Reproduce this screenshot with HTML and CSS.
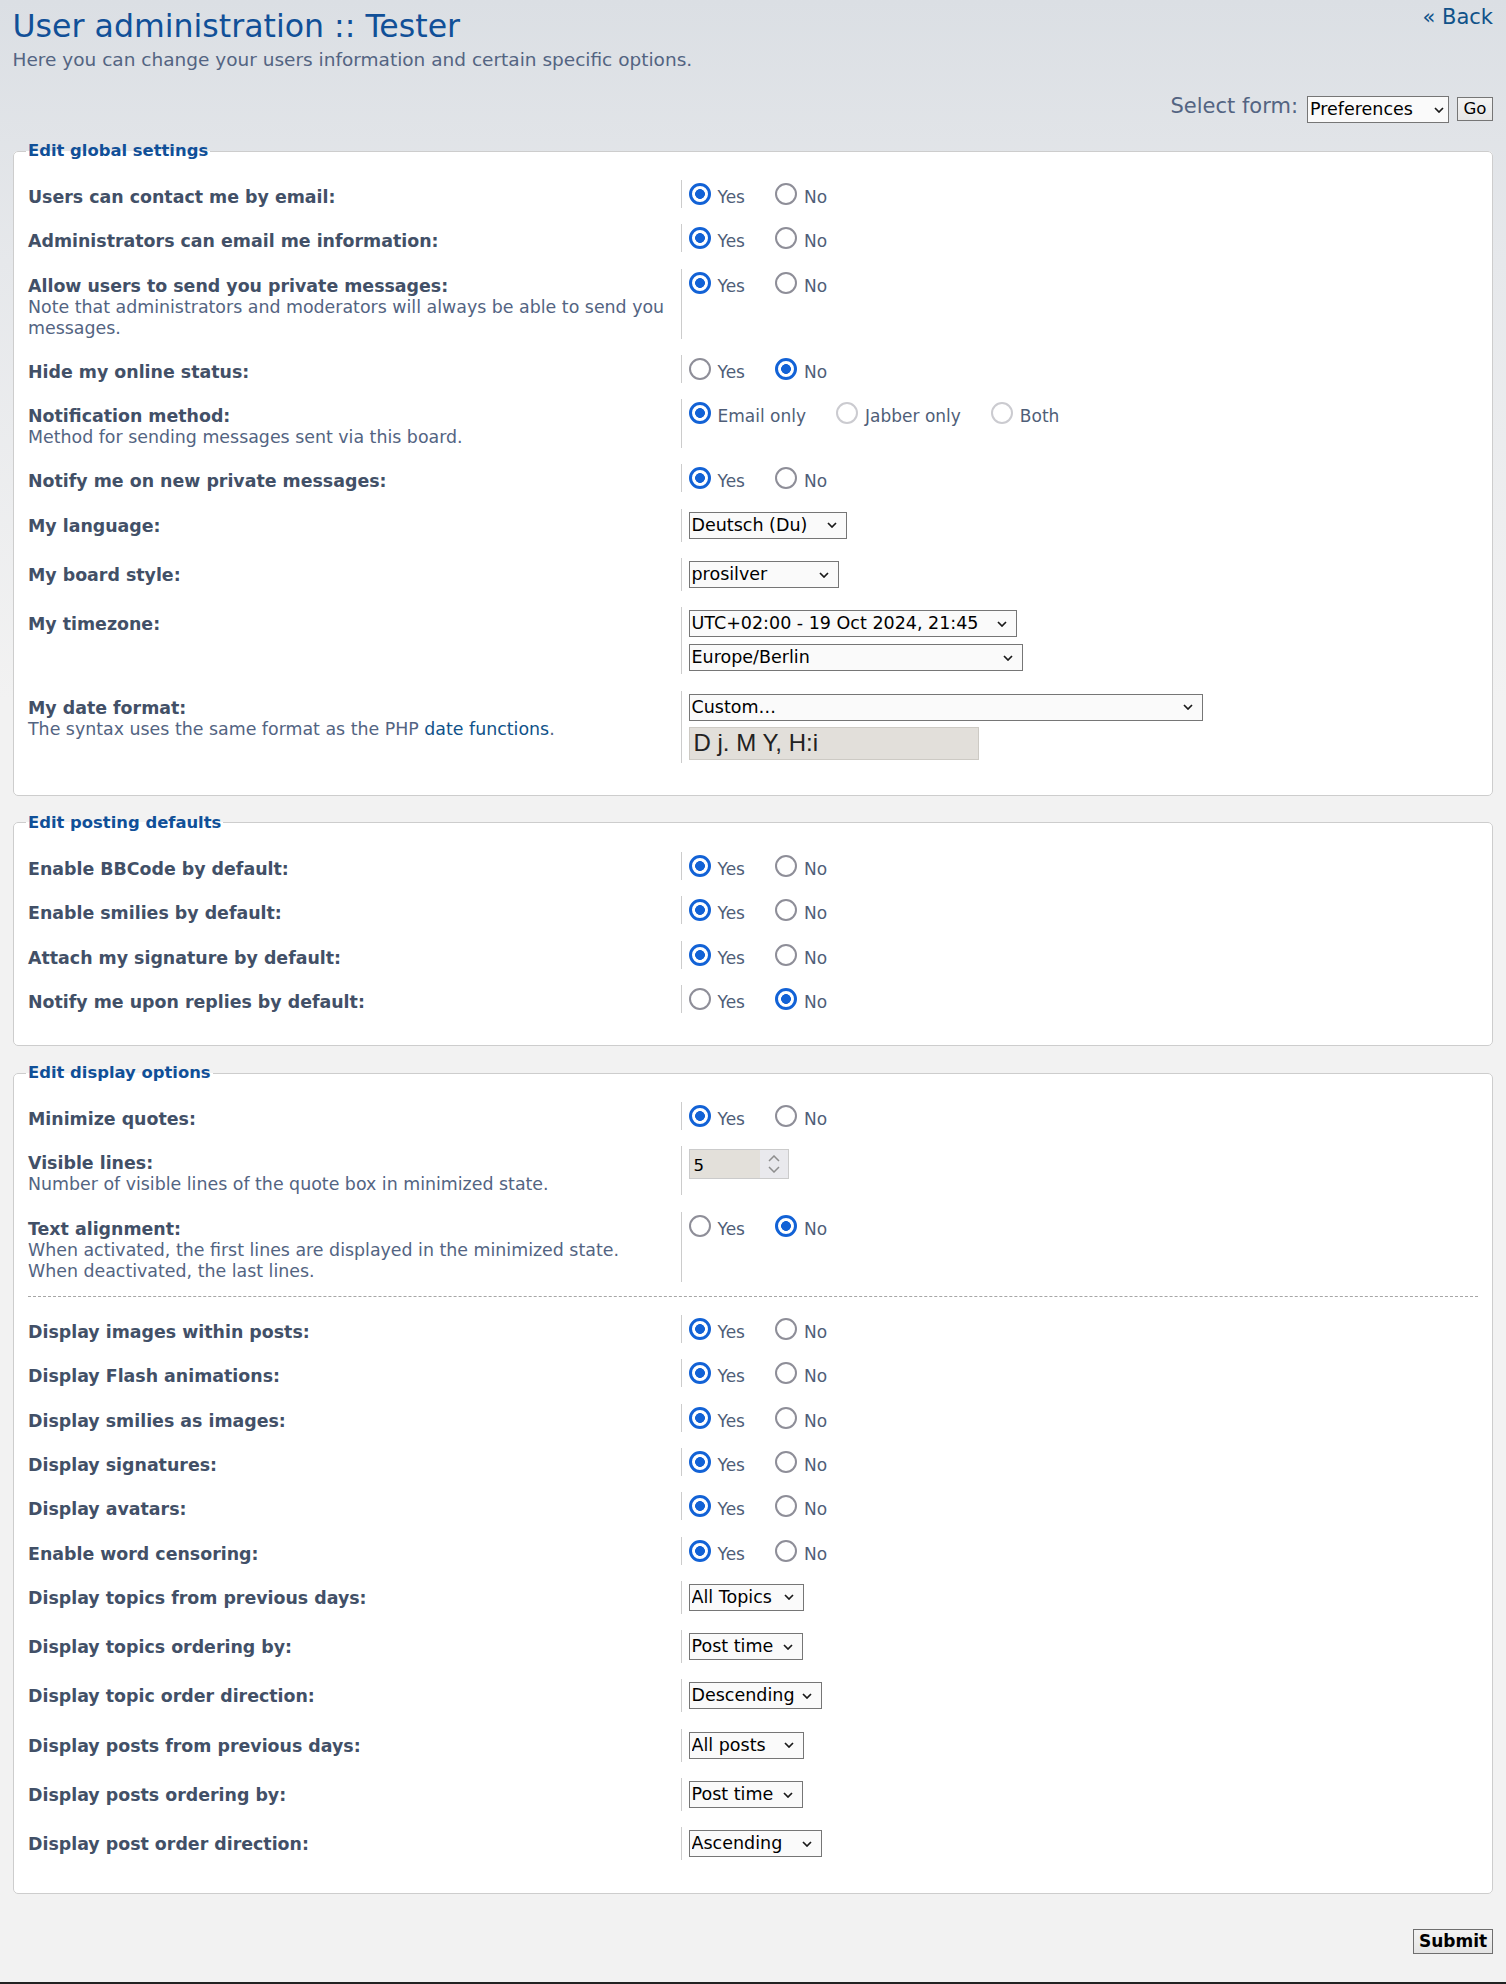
FILE: index.html
```html
<!DOCTYPE html>
<html lang="en">
<head>
<meta charset="utf-8">
<title>User administration :: Tester</title>
<link rel="stylesheet" href="styles.css">
</head>
<body>
<div class="page">
  <header class="head">
    <div class="head-text">
      <h1 class="title">User administration :: Tester</h1>
      <p class="intro">Here you can change your users information and certain specific options.</p>
    </div>
    <a class="back" href="#">« Back</a>
  </header>

  <form class="form" action="#">
    <div class="select-form">
      <label class="select-form-label" for="mode">Select form:</label>
      <span class="sel w-pref sel-tight">
        <select id="mode"><option>Preferences</option></select>
        <svg class="chev" viewBox="0 0 10 6"><path d="M1 1l4 4 4-4"/></svg>
      </span>
      <button type="button" class="go">Go</button>
    </div>

    <fieldset class="box">
      <legend>Edit global settings</legend>
      <dl class="row">
        <dt><label class="lbl">Users can contact me by email:</label></dt>
        <dd><div class="opts">
          <label class="opt"><input class="rd" type="radio" name="viewemail" checked><span class="opt-text">Yes</span></label>
          <label class="opt"><input class="rd" type="radio" name="viewemail"><span class="opt-text">No</span></label>
        </div></dd>
      </dl>
      <dl class="row">
        <dt><label class="lbl">Administrators can email me information:</label></dt>
        <dd><div class="opts">
          <label class="opt"><input class="rd" type="radio" name="massemail" checked><span class="opt-text">Yes</span></label>
          <label class="opt"><input class="rd" type="radio" name="massemail"><span class="opt-text">No</span></label>
        </div></dd>
      </dl>
      <dl class="row">
        <dt><label class="lbl">Allow users to send you private messages:</label><span class="explain">Note that administrators and moderators will always be able to send you messages.</span></dt>
        <dd><div class="opts">
          <label class="opt"><input class="rd" type="radio" name="allowpm" checked><span class="opt-text">Yes</span></label>
          <label class="opt"><input class="rd" type="radio" name="allowpm"><span class="opt-text">No</span></label>
        </div></dd>
      </dl>
      <dl class="row">
        <dt><label class="lbl">Hide my online status:</label></dt>
        <dd><div class="opts">
          <label class="opt"><input class="rd" type="radio" name="hideonline"><span class="opt-text">Yes</span></label>
          <label class="opt"><input class="rd" type="radio" name="hideonline" checked><span class="opt-text">No</span></label>
        </div></dd>
      </dl>
      <dl class="row">
        <dt><label class="lbl">Notification method:</label><span class="explain">Method for sending messages sent via this board.</span></dt>
        <dd><div class="opts">
          <label class="opt"><input class="rd" type="radio" name="notifymethod" checked><span class="opt-text">Email only</span></label>
          <label class="opt"><input class="rd" type="radio" name="notifymethod" disabled><span class="opt-text">Jabber only</span></label>
          <label class="opt"><input class="rd" type="radio" name="notifymethod" disabled><span class="opt-text">Both</span></label>
        </div></dd>
      </dl>
      <dl class="row">
        <dt><label class="lbl">Notify me on new private messages:</label></dt>
        <dd><div class="opts">
          <label class="opt"><input class="rd" type="radio" name="notifypm" checked><span class="opt-text">Yes</span></label>
          <label class="opt"><input class="rd" type="radio" name="notifypm"><span class="opt-text">No</span></label>
        </div></dd>
      </dl>
      <dl class="row">
        <dt><label class="lbl">My language:</label></dt>
        <dd class="ctl"><div class="stack">
          <span class="sel w-lang"><select><option>Deutsch (Du)</option></select><svg class="chev" viewBox="0 0 10 6"><path d="M1 1l4 4 4-4"/></svg></span>
        </div></dd>
      </dl>
      <dl class="row">
        <dt><label class="lbl">My board style:</label></dt>
        <dd class="ctl"><div class="stack">
          <span class="sel w-style"><select><option>prosilver</option></select><svg class="chev" viewBox="0 0 10 6"><path d="M1 1l4 4 4-4"/></svg></span>
        </div></dd>
      </dl>
      <dl class="row">
        <dt><label class="lbl">My timezone:</label></dt>
        <dd class="ctl"><div class="stack">
          <span class="sel w-tz"><select><option>UTC+02:00 - 19 Oct 2024, 21:45</option></select><svg class="chev" viewBox="0 0 10 6"><path d="M1 1l4 4 4-4"/></svg></span>
          <span class="sel w-zone"><select><option>Europe/Berlin</option></select><svg class="chev" viewBox="0 0 10 6"><path d="M1 1l4 4 4-4"/></svg></span>
        </div></dd>
      </dl>
      <dl class="row">
        <dt><label class="lbl">My date format:</label><span class="explain">The syntax uses the same format as the PHP <a href="#" class="link">date functions</a>.</span></dt>
        <dd class="ctl"><div class="stack stack-date">
          <span class="sel w-datefmt"><select><option>Custom…</option></select><svg class="chev" viewBox="0 0 10 6"><path d="M1 1l4 4 4-4"/></svg></span>
          <input class="date-in" type="text" value="D j. M Y, H:i">
        </div></dd>
      </dl>
    </fieldset>

    <fieldset class="box">
      <legend>Edit posting defaults</legend>
      <dl class="row">
        <dt><label class="lbl">Enable BBCode by default:</label></dt>
        <dd><div class="opts">
          <label class="opt"><input class="rd" type="radio" name="bbcode" checked><span class="opt-text">Yes</span></label>
          <label class="opt"><input class="rd" type="radio" name="bbcode"><span class="opt-text">No</span></label>
        </div></dd>
      </dl>
      <dl class="row">
        <dt><label class="lbl">Enable smilies by default:</label></dt>
        <dd><div class="opts">
          <label class="opt"><input class="rd" type="radio" name="smilies" checked><span class="opt-text">Yes</span></label>
          <label class="opt"><input class="rd" type="radio" name="smilies"><span class="opt-text">No</span></label>
        </div></dd>
      </dl>
      <dl class="row">
        <dt><label class="lbl">Attach my signature by default:</label></dt>
        <dd><div class="opts">
          <label class="opt"><input class="rd" type="radio" name="sig" checked><span class="opt-text">Yes</span></label>
          <label class="opt"><input class="rd" type="radio" name="sig"><span class="opt-text">No</span></label>
        </div></dd>
      </dl>
      <dl class="row">
        <dt><label class="lbl">Notify me upon replies by default:</label></dt>
        <dd><div class="opts">
          <label class="opt"><input class="rd" type="radio" name="notify"><span class="opt-text">Yes</span></label>
          <label class="opt"><input class="rd" type="radio" name="notify" checked><span class="opt-text">No</span></label>
        </div></dd>
      </dl>
    </fieldset>

    <fieldset class="box">
      <legend>Edit display options</legend>
      <dl class="row">
        <dt><label class="lbl">Minimize quotes:</label></dt>
        <dd><div class="opts">
          <label class="opt"><input class="rd" type="radio" name="minquote" checked><span class="opt-text">Yes</span></label>
          <label class="opt"><input class="rd" type="radio" name="minquote"><span class="opt-text">No</span></label>
        </div></dd>
      </dl>
      <dl class="row">
        <dt><label class="lbl">Visible lines:</label><span class="explain">Number of visible lines of the quote box in minimized state.</span></dt>
        <dd class="num-dd"><div class="num">
          <input class="num-in" type="text" value="5">
          <span class="spin">
            <svg class="spin-chev" viewBox="0 0 12 7"><path d="M1 6l5-5 5 5"/></svg>
            <svg class="spin-chev" viewBox="0 0 12 7"><path d="M1 1l5 5 5-5"/></svg>
          </span>
        </div></dd>
      </dl>
      <dl class="row">
        <dt><label class="lbl">Text alignment:</label><span class="explain">When activated, the first lines are displayed in the minimized state.<br>When deactivated, the last lines.</span></dt>
        <dd><div class="opts">
          <label class="opt"><input class="rd" type="radio" name="textalign"><span class="opt-text">Yes</span></label>
          <label class="opt"><input class="rd" type="radio" name="textalign" checked><span class="opt-text">No</span></label>
        </div></dd>
      </dl>
      <hr class="dashed">
      <dl class="row">
        <dt><label class="lbl">Display images within posts:</label></dt>
        <dd><div class="opts">
          <label class="opt"><input class="rd" type="radio" name="images" checked><span class="opt-text">Yes</span></label>
          <label class="opt"><input class="rd" type="radio" name="images"><span class="opt-text">No</span></label>
        </div></dd>
      </dl>
      <dl class="row">
        <dt><label class="lbl">Display Flash animations:</label></dt>
        <dd><div class="opts">
          <label class="opt"><input class="rd" type="radio" name="flash" checked><span class="opt-text">Yes</span></label>
          <label class="opt"><input class="rd" type="radio" name="flash"><span class="opt-text">No</span></label>
        </div></dd>
      </dl>
      <dl class="row">
        <dt><label class="lbl">Display smilies as images:</label></dt>
        <dd><div class="opts">
          <label class="opt"><input class="rd" type="radio" name="smiliesimg" checked><span class="opt-text">Yes</span></label>
          <label class="opt"><input class="rd" type="radio" name="smiliesimg"><span class="opt-text">No</span></label>
        </div></dd>
      </dl>
      <dl class="row">
        <dt><label class="lbl">Display signatures:</label></dt>
        <dd><div class="opts">
          <label class="opt"><input class="rd" type="radio" name="sigs" checked><span class="opt-text">Yes</span></label>
          <label class="opt"><input class="rd" type="radio" name="sigs"><span class="opt-text">No</span></label>
        </div></dd>
      </dl>
      <dl class="row">
        <dt><label class="lbl">Display avatars:</label></dt>
        <dd><div class="opts">
          <label class="opt"><input class="rd" type="radio" name="avatars" checked><span class="opt-text">Yes</span></label>
          <label class="opt"><input class="rd" type="radio" name="avatars"><span class="opt-text">No</span></label>
        </div></dd>
      </dl>
      <dl class="row">
        <dt><label class="lbl">Enable word censoring:</label></dt>
        <dd><div class="opts">
          <label class="opt"><input class="rd" type="radio" name="censor" checked><span class="opt-text">Yes</span></label>
          <label class="opt"><input class="rd" type="radio" name="censor"><span class="opt-text">No</span></label>
        </div></dd>
      </dl>
      <dl class="row">
        <dt><label class="lbl">Display topics from previous days:</label></dt>
        <dd class="ctl"><div class="stack">
          <span class="sel w-days"><select><option>All Topics</option></select><svg class="chev" viewBox="0 0 10 6"><path d="M1 1l4 4 4-4"/></svg></span>
        </div></dd>
      </dl>
      <dl class="row">
        <dt><label class="lbl">Display topics ordering by:</label></dt>
        <dd class="ctl"><div class="stack">
          <span class="sel w-order"><select><option>Post time</option></select><svg class="chev" viewBox="0 0 10 6"><path d="M1 1l4 4 4-4"/></svg></span>
        </div></dd>
      </dl>
      <dl class="row">
        <dt><label class="lbl">Display topic order direction:</label></dt>
        <dd class="ctl"><div class="stack">
          <span class="sel w-dir"><select><option>Descending</option></select><svg class="chev" viewBox="0 0 10 6"><path d="M1 1l4 4 4-4"/></svg></span>
        </div></dd>
      </dl>
      <dl class="row">
        <dt><label class="lbl">Display posts from previous days:</label></dt>
        <dd class="ctl"><div class="stack">
          <span class="sel w-days"><select><option>All posts</option></select><svg class="chev" viewBox="0 0 10 6"><path d="M1 1l4 4 4-4"/></svg></span>
        </div></dd>
      </dl>
      <dl class="row">
        <dt><label class="lbl">Display posts ordering by:</label></dt>
        <dd class="ctl"><div class="stack">
          <span class="sel w-order"><select><option>Post time</option></select><svg class="chev" viewBox="0 0 10 6"><path d="M1 1l4 4 4-4"/></svg></span>
        </div></dd>
      </dl>
      <dl class="row">
        <dt><label class="lbl">Display post order direction:</label></dt>
        <dd class="ctl"><div class="stack">
          <span class="sel w-dir"><select><option>Ascending</option></select><svg class="chev" viewBox="0 0 10 6"><path d="M1 1l4 4 4-4"/></svg></span>
        </div></dd>
      </dl>
    </fieldset>

    <div class="actions">
      <button type="button" class="submit">Submit</button>
    </div>
  </form>
</div>
<div class="footer-bar"></div>
</body>
</html>
```

FILE: styles.css
```css
* {
  box-sizing: border-box;
}

html {
  background: #f2f2f2;
}

body {
  margin: 0;
  font-family: "DejaVu Sans", Verdana, sans-serif;
  color: #536482;
  background: #f2f2f2 linear-gradient(to bottom, #dbdfe4 0, #e6e8eb 260px, #f2f2f2 700px) no-repeat;
}

.page {
  padding: 0 13px 0 10px;
}

/* Header */
.head {
  display: flex;
  justify-content: space-between;
  align-items: flex-start;
  margin-left: 2.5px;
}

.title {
  margin: 7px 0 0;
  font-size: 31.6px;
  line-height: 38px;
  font-weight: normal;
  color: #115098;
}

.intro {
  margin: 3px 0 0;
  font-size: 18.5px;
  line-height: 24px;
  color: #536482;
}

.back {
  margin-top: 4px;
  font-size: 21px;
  line-height: 26px;
  color: #105289;
  text-decoration: none;
}

/* Select form */
.select-form {
  display: flex;
  justify-content: flex-end;
  align-items: flex-start;
  margin: 24px 0 17px;
}

.select-form-label {
  margin: -2px 9px 0 0;
  font-size: 21px;
  line-height: 24px;
  color: #536482;
}

.go {
  margin: 1px 0 0 8px;
  width: 36px;
  height: 24px;
  padding: 0;
  border: 1px solid #767676;
  background: linear-gradient(#f4f4f4, #e6e6e6);
  font-family: "DejaVu Sans", Verdana, sans-serif;
  font-size: 16.6px;
  line-height: 22px;
  color: #000;
}

/* Fieldsets */
.box {
  margin: 0 0 16px 3px;
  padding: 18px 14px 16px;
  min-width: 0;
  border: 1px solid #cdcdcd;
  border-radius: 5px;
  background: #fff;
}

.box legend {
  margin-left: -2px;
  padding: 0 2px;
  font-size: 16.4px;
  line-height: 22px;
  font-weight: bold;
  color: #115098;
}

.row {
  display: flex;
  margin: 0 0 16.3px;
}

.row dt {
  flex: none;
  width: 45%;
  padding-top: 7px;
  font-size: 17.4px;
  line-height: 21px;
}

.lbl {
  font-weight: bold;
  color: #425067;
}

.explain {
  display: block;
  color: #536482;
}

.link {
  color: #105289;
  text-decoration: none;
}

.row dd {
  flex: 1;
  min-width: 0;
  margin: 0;
  padding-left: 7px;
  border-left: 1px solid #cccccc;
}

.row dd.ctl {
  padding-top: 3px;
  padding-bottom: 3px;
}

.row dd.num-dd {
  padding-top: 3px;
}

/* Radios */
.opts {
  display: flex;
  align-items: flex-start;
}

.opt {
  display: flex;
  align-items: flex-start;
  margin-right: 30px;
  font-size: 17px;
  line-height: 21px;
  color: #4f5e78;
}

.opt-text {
  padding-top: 7px;
}

.rd {
  -webkit-appearance: none;
  appearance: none;
  flex: none;
  width: 22px;
  height: 22px;
  margin: 3px 7px 0 0;
  border: 2px solid #8e8e98;
  border-radius: 50%;
  background: #fff;
}

.rd:checked {
  border: 3.5px solid #1262d6;
  background: radial-gradient(circle, #1262d6 0, #1262d6 4.6px, #fff 5.2px);
}

.rd:disabled {
  border-color: #cbcbd0;
}

/* Selects */
.stack {
  display: flex;
  flex-direction: column;
  align-items: flex-start;
  gap: 7px;
}

.stack-date {
  gap: 6px;
}

.sel {
  position: relative;
  display: block;
  height: 27px;
}

.sel select {
  -webkit-appearance: none;
  appearance: none;
  display: block;
  width: 100%;
  height: 27px;
  margin: 0;
  padding: 0 22px 0 2px;
  border: 1px solid #767676;
  border-radius: 0;
  background: #fafafa;
  font-family: "DejaVu Sans", Verdana, sans-serif;
  font-size: 17.5px;
  line-height: 25px;
  color: #000;
}

.chev {
  position: absolute;
  top: 50%;
  right: 10px;
  width: 10px;
  height: 6px;
  margin-top: -3px;
  fill: none;
  stroke: #1a1a1a;
  stroke-width: 1.7;
  pointer-events: none;
}

.sel-tight .chev {
  right: 5px;
}

.w-pref { width: 142px; }
.w-lang { width: 158px; }
.w-style { width: 150px; }
.w-tz { width: 328px; }
.w-zone { width: 334px; }
.w-datefmt { width: 514px; }
.w-days { width: 115px; }
.w-order { width: 114px; }
.w-dir { width: 133px; }

.date-in {
  display: block;
  width: 290px;
  height: 33px;
  margin: 0;
  padding: 0 4px;
  border: 1px solid #cdcac4;
  background: #e2dfda;
  font-family: "Liberation Sans", Arial, sans-serif;
  font-size: 24px;
  color: #222;
}

/* Number input */
.num {
  display: flex;
  width: 100px;
  height: 30px;
  border: 1px solid #cbcbcb;
  background: #e3e0da;
}

.num-in {
  width: 70px;
  margin: 0;
  padding: 2px 0 0 4px;
  border: 0;
  background: transparent;
  font-family: "DejaVu Sans", Verdana, sans-serif;
  font-size: 16.5px;
  color: #000;
}

.spin {
  display: flex;
  flex-direction: column;
  align-items: center;
  justify-content: center;
  gap: 4px;
  width: 28px;
  background: #e9e9ed;
}

.spin-chev {
  width: 12px;
  height: 7px;
  fill: none;
  stroke: #8e8e8e;
  stroke-width: 1.5;
}

.dashed {
  height: 0;
  margin: -2px 0 18px;
  border: 0;
  border-top: 1px dashed #a6a6a6;
}

/* Actions */
.actions {
  display: flex;
  justify-content: flex-end;
  margin: 0;
  padding: 19px 0 28px;
}

.submit {
  width: 80px;
  height: 25px;
  padding: 0;
  border: 1px solid #6f6f6f;
  background: linear-gradient(#f3f3f3, #e4e4e4);
  font-family: "DejaVu Sans", Verdana, sans-serif;
  font-size: 17px;
  font-weight: bold;
  line-height: 23px;
  color: #000;
}

.footer-bar {
  height: 10px;
  background: #222;
}
```
